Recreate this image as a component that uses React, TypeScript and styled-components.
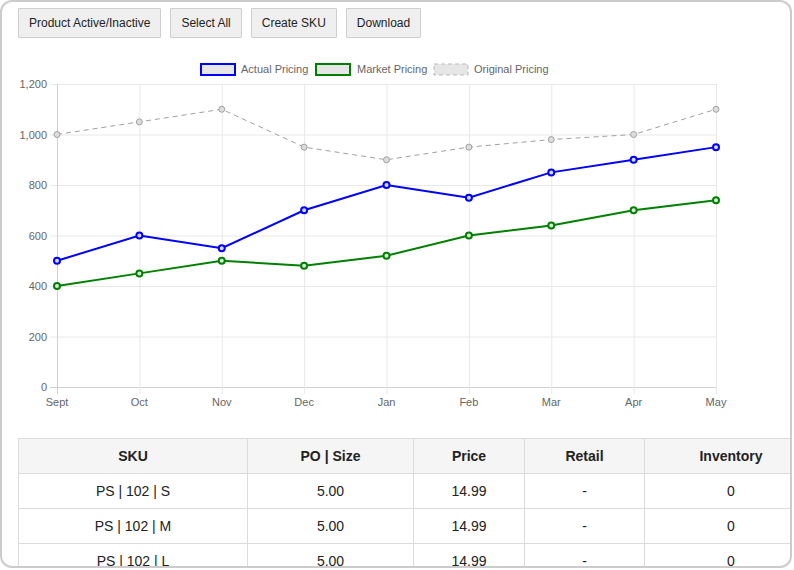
import React from "react";
import styled, { createGlobalStyle } from "styled-components";

const Global = createGlobalStyle`
  html, body { margin: 0; padding: 0; background: #ffffff; }
  body { font-family: "Liberation Sans", Arial, sans-serif; }
`;

const Frame = styled.div`
  box-sizing: border-box;
  width: 792px;
  height: 568px;
  border: 2px solid #cccccc;
  border-radius: 12px;
  overflow: hidden;
  background: #fff;
  padding: 6px 0 0 16px;
`;

const Toolbar = styled.div`
  display: flex;
  gap: 9px;
`;

const Button = styled.button`
  height: 30px;
  padding: 0 10px;
  font-family: "Liberation Sans", Arial, sans-serif;
  font-size: 12px;
  color: #222;
  background: #efefef;
  border: 1px solid #cfcfcf;
  border-radius: 1px;
  cursor: pointer;
`;

const ChartSvg = styled.svg`
  display: block;
  margin-top: 11px;
  font-family: "Liberation Sans", Arial, sans-serif;
`;

const Table = styled.table`
  border-collapse: collapse;
  width: 794px;
  table-layout: fixed;
  font-family: "Liberation Sans", Arial, sans-serif;
  font-size: 14px;
  color: #222;
`;

const Th = styled.th<{ $w: number }>`
  width: ${(p) => p.$w}px;
  height: 34px;
  background: #f5f5f5;
  border: 1px solid #dcdcdc;
  font-weight: bold;
  text-align: center;
  padding: 0;
`;

const Td = styled.td`
  height: 34px;
  border: 1px solid #dcdcdc;
  text-align: center;
  padding: 0;
`;

const months = ["Sept", "Oct", "Nov", "Dec", "Jan", "Feb", "Mar", "Apr", "May"];
const actual = [500, 600, 550, 700, 800, 750, 850, 900, 950];
const market = [400, 450, 500, 480, 520, 600, 640, 700, 740];
const original = [1000, 1050, 1100, 950, 900, 950, 980, 1000, 1100];

const X0 = 39;
const X1 = 698;
const Y0 = 338;
const Y1 = 35;
const xAt = (i: number) => X0 + ((X1 - X0) * i) / 8;
const yAt = (v: number) => Y0 - ((Y0 - Y1) * v) / 1200;

function Series({ data, color, dashed, fill }: { data: number[]; color: string; dashed?: boolean; fill: string }) {
  const pts = data.map((v, i) => `${xAt(i)},${yAt(v)}`).join(" ");
  return (
    <g>
      <polyline
        points={pts}
        fill="none"
        stroke={color}
        strokeWidth={dashed ? 1 : 2}
        strokeDasharray={dashed ? "5 4" : undefined}
      />
      {data.map((v, i) => (
        <circle key={i} cx={xAt(i)} cy={yAt(v)} r={3} fill={fill} stroke={color} strokeWidth={dashed ? 1 : 2} />
      ))}
    </g>
  );
}

function Chart() {
  const ticks = [0, 200, 400, 600, 800, 1000, 1200];
  return (
    <ChartSvg width={776} height={389} viewBox="0 0 776 389">
      {/* legend */}
      <g fontSize={11} fill="#666">
        <rect x={183} y={15} width={34} height={11} fill="#e6e6e6" stroke="#0000ff" strokeWidth={2} />
        <text x={223} y={23.5}>Actual Pricing</text>
        <rect x={298} y={15} width={34} height={11} fill="#e6e6e6" stroke="#008000" strokeWidth={2} />
        <text x={339} y={23.5}>Market Pricing</text>
        <rect x={416} y={15} width={34} height={11} fill="#e6e6e6" stroke="#bbbbbb" strokeWidth={1} strokeDasharray="4 3" />
        <text x={456} y={23.5}>Original Pricing</text>
      </g>
      {/* horizontal grid */}
      {ticks.map((t) => (
        <g key={t}>
          <line x1={X0 - 7} x2={X1} y1={yAt(t) + 0.5} y2={yAt(t) + 0.5} stroke={t === 0 ? "#d0d0d0" : "#e8e8e8"} strokeWidth={1} />
          <text x={X0 - 10} y={yAt(t) + 4} fontSize={11} fill="#666" textAnchor="end">
            {t.toLocaleString("en-US")}
          </text>
        </g>
      ))}
      {/* vertical grid */}
      {months.map((m, i) => (
        <g key={m}>
          <line x1={xAt(i) + 0.5} x2={xAt(i) + 0.5} y1={Y1} y2={Y0 + 7} stroke={i === 0 ? "#d0d0d0" : "#e8e8e8"} strokeWidth={1} />
          <text x={xAt(i)} y={357} fontSize={11} fill="#666" textAnchor="middle">
            {m}
          </text>
        </g>
      ))}
      <Series data={original} color="#a0a0a0" dashed fill="#dddddd" />
      <Series data={market} color="#008000" fill="#d9ecd9" />
      <Series data={actual} color="#0000ff" fill="#d9d9ff" />
    </ChartSvg>
  );
}

const rows = [
  ["PS | 102 | S", "5.00", "14.99", "-", "0"],
  ["PS | 102 | M", "5.00", "14.99", "-", "0"],
  ["PS | 102 | L", "5.00", "14.99", "-", "0"],
];

const cols: [string, number][] = [
  ["SKU", 228],
  ["PO | Size", 165],
  ["Price", 110],
  ["Retail", 119],
  ["Inventory", 172],
];

export default function App() {
  return (
    <>
      <Global />
      <Frame>
        <Toolbar>
          <Button>Product Active/Inactive</Button>
          <Button>Select All</Button>
          <Button>Create SKU</Button>
          <Button>Download</Button>
        </Toolbar>
        <Chart />
        <Table>
          <thead>
            <tr>
              {cols.map(([c, w]) => (
                <Th key={c} $w={w}>
                  {c}
                </Th>
              ))}
            </tr>
          </thead>
          <tbody>
            {rows.map((r, i) => (
              <tr key={i}>
                {r.map((c, j) => (
                  <Td key={j}>{c}</Td>
                ))}
              </tr>
            ))}
          </tbody>
        </Table>
      </Frame>
    </>
  );
}
